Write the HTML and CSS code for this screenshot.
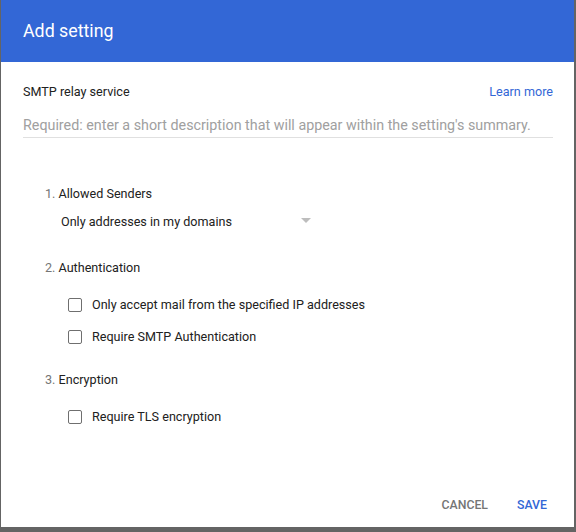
FILE: index.html
```
<!DOCTYPE html>
<html>
<head>
<meta charset="utf-8">
<link rel="stylesheet" href="styles.css">
</head>
<body>
<div class="dialog">
  <div class="header">Add setting</div>
  <div class="content">
    <div class="row-top">
      <span class="setting-name">SMTP relay service</span>
      <a class="learn">Learn more</a>
    </div>
    <div class="desc">Required: enter a short description that will appear within the setting's summary.</div>

    <div class="section first">
      <div class="sec-title"><span class="num">1.</span> Allowed Senders</div>
      <div class="select">
        <span>Only addresses in my domains</span>
        <span class="arrow"></span>
      </div>
    </div>

    <div class="section second">
      <div class="sec-title"><span class="num">2.</span> Authentication</div>
      <div class="checks">
        <label class="check"><span class="box"></span>Only accept mail from the specified IP addresses</label>
        <label class="check"><span class="box"></span>Require SMTP Authentication</label>
      </div>
    </div>

    <div class="section third">
      <div class="sec-title"><span class="num">3.</span> Encryption</div>
      <div class="checks">
        <label class="check"><span class="box"></span>Require TLS encryption</label>
      </div>
    </div>
  </div>
  <div class="footer">
    <span class="btn cancel">Cancel</span>
    <span class="btn save">Save</span>
  </div>
</div>
</body>
</html>
```
FILE: styles.css
```
html, body {
  margin: 0;
  padding: 0;
}
body {
  background: #646464;
  width: 576px;
  height: 532px;
  overflow: hidden;
  font-family: Roboto, "Liberation Sans", sans-serif;
}
.dialog {
  margin-left: 1px;
  width: 573px;
  height: 527px;
  background: #fff;
  display: flex;
  flex-direction: column;
}
.header {
  height: 62px;
  background: #3367d6;
  color: #fff;
  font-size: 17.8px;
  line-height: 62px;
  padding-left: 22px;
  flex-shrink: 0;
}
.content {
  padding: 20px 21px 0 22px;
  color: #212121;
  font-size: 12.6px;
}
.row-top {
  display: flex;
  justify-content: space-between;
  line-height: 20px;
}
.learn {
  color: #3367d6;
}
.desc {
  margin-top: 11px;
  color: #a0a0a0;
  font-size: 14.3px;
  line-height: 24px;
  border-bottom: 1px solid #e0e0e0;
  white-space: nowrap;
}
.section {
  padding-left: 22px;
}
.section.first { margin-top: 46px; }
.section.second { margin-top: 26px; }
.section.third { margin-top: 23px; }
.sec-title {
  line-height: 20px;
}
.num {
  color: #757575;
}
.select {
  margin-top: 8px;
  margin-left: 16px;
  width: 252px;
  display: flex;
  justify-content: space-between;
  align-items: center;
  line-height: 20px;
}
.arrow {
  width: 0;
  height: 0;
  border-left: 5px solid transparent;
  border-right: 5px solid transparent;
  border-top: 5px solid #bdbdbd;
  margin-right: 2px;
  margin-top: -4px;
}
.checks {
  margin-top: 17px;
  margin-left: 23px;
  display: flex;
  flex-direction: column;
  gap: 12px;
}
.check {
  display: flex;
  align-items: center;
  line-height: 20px;
}
.box {
  width: 12px;
  height: 12px;
  border: 1.5px solid #6f6f6f;
  border-radius: 2px;
  margin-right: 10px;
  flex-shrink: 0;
}
.footer {
  margin-top: auto;
  display: flex;
  justify-content: flex-end;
  align-items: center;
  gap: 29px;
  padding-right: 27px;
  height: 44px;
  font-size: 12.3px;
  font-weight: 500;
  text-transform: uppercase;
}
.cancel { color: #757575; }
.save { color: #3367d6; }
```
